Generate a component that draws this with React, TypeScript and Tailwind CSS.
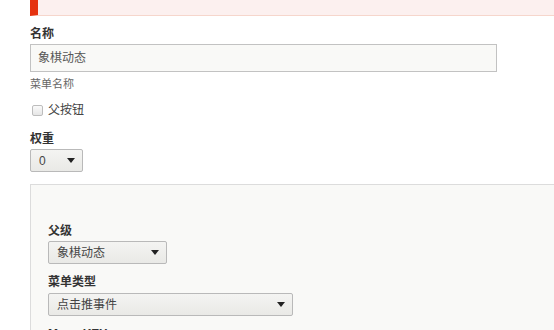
import React from "react";

const FONT = {
  fontFamily: '"Liberation Sans", "Noto Sans CJK SC", sans-serif',
};

function Caret() {
  return (
    <svg width="8" height="5" viewBox="0 0 8 5" className="shrink-0">
      <path d="M0 0 H8 L4 5 Z" fill="#222" />
    </svg>
  );
}

function Select({ value, width }: { value: string; width: string }) {
  return (
    <div
      className={`${width} h-[23px] flex items-center justify-between pl-[8px] pr-[7px] rounded-[2px] border border-[#b9b9b9] bg-gradient-to-b from-[#f4f4f2] to-[#e9e9e6] text-[12px] text-[#444]`}
    >
      <span>{value}</span>
      <Caret />
    </div>
  );
}

export default function App() {
  return (
    <div style={FONT} className="w-[554px] h-[330px] overflow-hidden bg-white pl-[30px]">
      {/* error banner */}
      <div className="h-[16px] border-l-[8px] border-l-[#e5320f] border-b border-b-[#f6d6cc] bg-[#fcf0ef]" />

      <div className="mt-[10px] text-[12px] leading-[16px] font-bold text-[#333]">名称</div>
      <div className="mt-[2px] w-[467px] h-[28px] flex items-center px-[7px] border border-[#c2c2c2] bg-[#f9f9f7] text-[12px] text-[#555]">
        象棋动态
      </div>
      <div className="mt-[4px] text-[11px] leading-[16px] text-[#666]">菜单名称</div>

      <label className="mt-[10px] flex items-center gap-[5px] h-[16px] text-[12px] text-[#444]">
        <span className="ml-[2px] w-[11px] h-[11px] rounded-[2px] border border-[#bdbdbd] bg-gradient-to-b from-[#fafafa] to-[#e6e6e6]" />
        父按钮
      </label>

      <div className="mt-[13px] text-[12px] leading-[16px] font-bold text-[#333]">权重</div>
      <div className="mt-[2px]">
        <Select value="0" width="w-[53px]" />
      </div>

      {/* parent panel */}
      <div className="mt-[12px] h-[200px] border-t border-l border-[#dcdcdc] bg-[#f9f9f7] pl-[17px] pt-[38px]">
        <div className="text-[12px] leading-[16px] font-bold text-[#333]">父级</div>
        <div className="mt-[2px]">
          <Select value="象棋动态" width="w-[119px]" />
        </div>
        <div className="mt-[10px] text-[12px] leading-[16px] font-bold text-[#333]">菜单类型</div>
        <div className="mt-[3px]">
          <Select value="点击推事件" width="w-[245px]" />
        </div>
        <div className="mt-[10px] text-[12px] leading-[16px] font-bold text-[#333]">Menu KEY</div>
      </div>
    </div>
  );
}
